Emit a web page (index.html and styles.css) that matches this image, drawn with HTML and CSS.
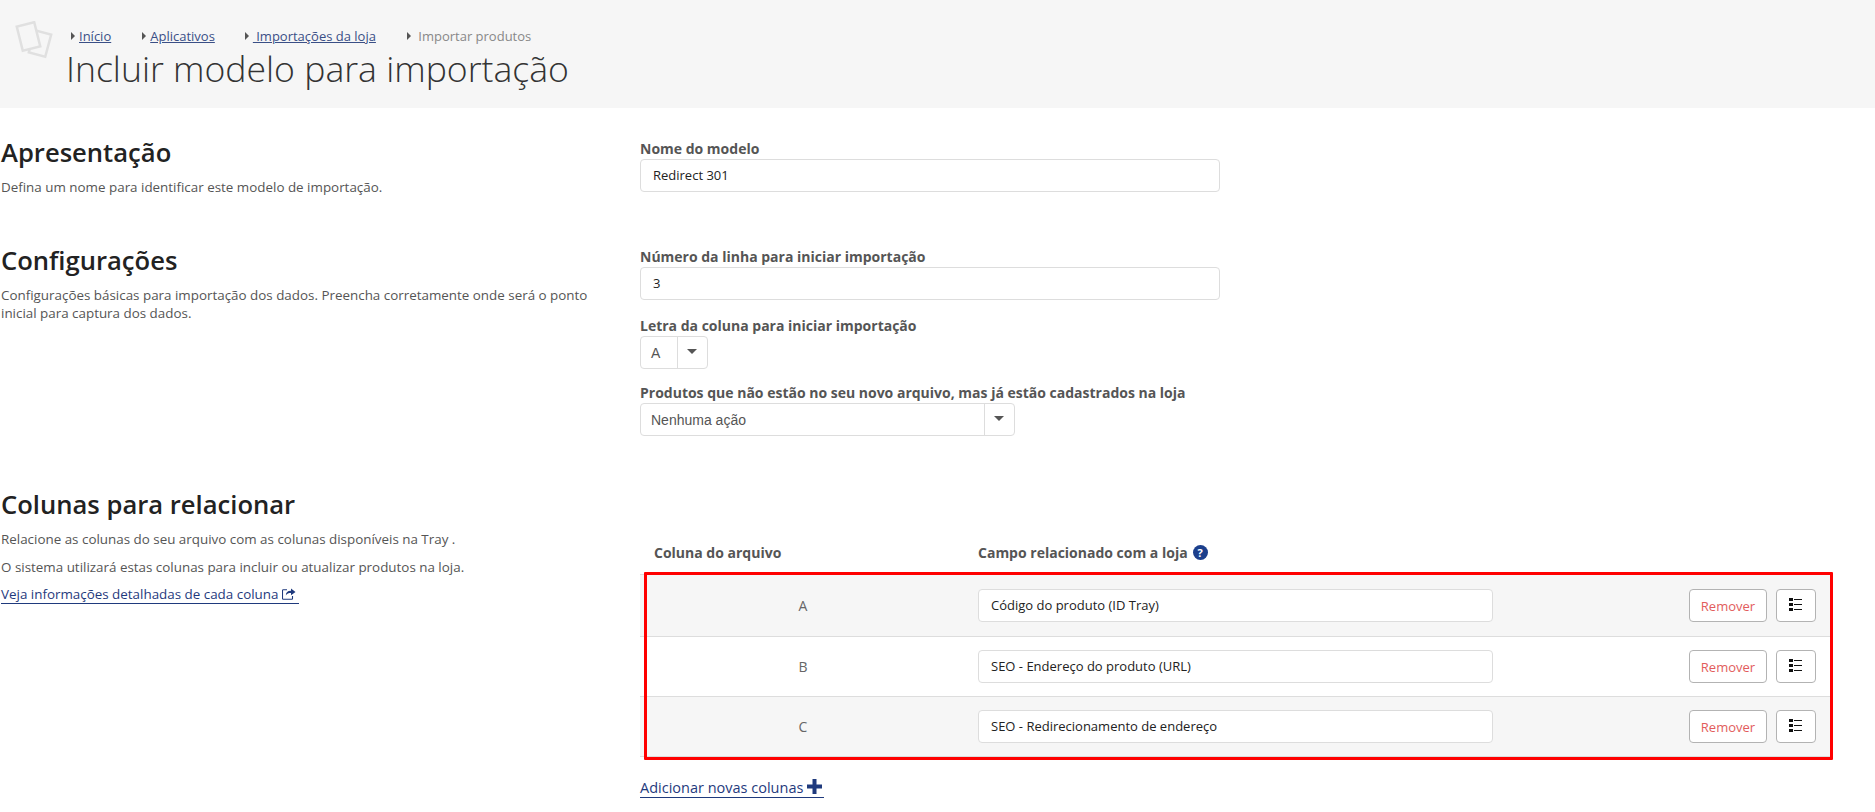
FILE: index.html
```html
<!DOCTYPE html>
<html lang="pt-BR">
<head>
<meta charset="utf-8">
<title>Incluir modelo para importação</title>
<link rel="stylesheet" href="styles.css">
</head>
<body>
<header class="page-header">
  <svg class="header-icon" width="40" height="44" viewBox="0 0 40 44" aria-hidden="true">
    <rect x="16.500" y="11" width="17" height="23" transform="rotate(15 25 22.500)" fill="none" stroke="#e0e0e0" stroke-width="2.500"/>
    <rect x="4.500" y="3" width="18" height="25" transform="rotate(-14 13.500 15.500)" fill="#f6f6f6" stroke="#e0e0e0" stroke-width="2.500"/>
  </svg>
  <div class="header-body">
    <nav class="breadcrumb">
      <span class="crumb crumb-1"><a href="#">Início</a></span>
      <span class="crumb crumb-2"><a href="#">Aplicativos</a></span>
      <span class="crumb crumb-3"><a href="#">&nbsp;Importações da loja</a></span>
      <span class="crumb crumb-4">&nbsp;Importar produtos</span>
    </nav>
    <h1 class="page-title">Incluir modelo para importação</h1>
  </div>
</header>

<main>
  <section class="section section-intro">
    <div class="section-side">
      <h2>Apresentação</h2>
      <p>Defina um nome para identificar este modelo de importação.</p>
    </div>
    <div class="section-form">
      <label class="label">Nome do modelo</label>
      <input class="input input-wide" type="text" value="Redirect 301">
    </div>
  </section>

  <section class="section section-config">
    <div class="section-side">
      <h2>Configurações</h2>
      <p>Configurações básicas para importação dos dados. Preencha corretamente onde será o ponto inicial para captura dos dados.</p>
    </div>
    <div class="section-form">
      <label class="label">Número da linha para iniciar importação</label>
      <input class="input input-wide" type="text" value="3">
      <label class="label label-second">Letra da coluna para iniciar importação</label>
      <div class="select select-small"><span class="select-value">A</span><span class="select-arrow"></span></div>
      <label class="label label-third">Produtos que não estão no seu novo arquivo, mas já estão cadastrados na loja</label>
      <div class="select select-large"><span class="select-value">Nenhuma ação</span><span class="select-arrow"></span></div>
    </div>
  </section>

  <section class="section section-columns">
    <div class="section-side">
      <h2>Colunas para relacionar</h2>
      <p class="para">Relacione as colunas do seu arquivo com as colunas disponíveis na Tray .</p>
      <p class="para">O sistema utilizará estas colunas para incluir ou atualizar produtos na loja.</p>
      <a class="info-link" href="#">Veja informações detalhadas de cada coluna
        <svg width="14" height="12" viewBox="0 0 14 12" aria-hidden="true"><path d="M9 0.5v2.2C5.500 2.700 3.800 4.600 3.800 7.400 5 5.700 6.600 5.100 9 5.100v2.200L13.500 3.900z" fill="#1f3a7d"/><path d="M5 1.800H1.200a.7.7 0 0 0-.7.7v8a.7.7 0 0 0 .7.7h8.600a.7.7 0 0 0 .7-.7V8" fill="none" stroke="#1f3a7d" stroke-width="1.100"/></svg>
      </a>
    </div>
    <div class="section-form">
      <div class="table-wrap">
        <div class="table-head">
          <div class="col-file">Coluna do arquivo</div>
          <div class="col-field">Campo relacionado com a loja <span class="help">?</span></div>
        </div>
        <div class="row row-first row-odd">
          <div class="cell-letter">A</div>
          <div class="cell-field"><input class="input input-field" type="text" value="Código do produto (ID Tray)"></div>
          <div class="cell-actions">
            <button class="btn btn-remove" type="button">Remover</button>
            <button class="btn btn-list" type="button" aria-label="Lista"><svg width="13" height="13" viewBox="0 0 13 13" shape-rendering="crispEdges"><path d="M0 0h4v3H0zM0 5h4v3H0zM0 10h4v3H0zM5 1h8v1H5zM5 6h8v1H5zM5 11h8v1H5z" fill="#111"/></svg></button>
          </div>
        </div>
        <div class="row">
          <div class="cell-letter">B</div>
          <div class="cell-field"><input class="input input-field" type="text" value="SEO - Endereço do produto (URL)"></div>
          <div class="cell-actions">
            <button class="btn btn-remove" type="button">Remover</button>
            <button class="btn btn-list" type="button" aria-label="Lista"><svg width="13" height="13" viewBox="0 0 13 13" shape-rendering="crispEdges"><path d="M0 0h4v3H0zM0 5h4v3H0zM0 10h4v3H0zM5 1h8v1H5zM5 6h8v1H5zM5 11h8v1H5z" fill="#111"/></svg></button>
          </div>
        </div>
        <div class="row row-odd">
          <div class="cell-letter">C</div>
          <div class="cell-field"><input class="input input-field" type="text" value="SEO - Redirecionamento de endereço"></div>
          <div class="cell-actions">
            <button class="btn btn-remove" type="button">Remover</button>
            <button class="btn btn-list" type="button" aria-label="Lista"><svg width="13" height="13" viewBox="0 0 13 13" shape-rendering="crispEdges"><path d="M0 0h4v3H0zM0 5h4v3H0zM0 10h4v3H0zM5 1h8v1H5zM5 6h8v1H5zM5 11h8v1H5z" fill="#111"/></svg></button>
          </div>
        </div>
        <div class="highlight"></div>
      </div>
      <a class="add-link" href="#">Adicionar novas colunas <svg width="15" height="15" viewBox="0 0 15 15" aria-hidden="true"><path d="M5.500 0h4v5.500H15v4H9.500V15h-4V9.500H0v-4h5.500z" fill="#1f3a7d"/></svg></a>
    </div>
  </section>
</main>
</body>
</html>
```
FILE: styles.css
```css
* { box-sizing: border-box; }
html, body { margin: 0; padding: 0; }
body {
  font-family: "Open Sans", sans-serif;
  font-size: 13.400px;
  color: #555;
  background: #fff;
  overflow: hidden;
  height: 812px;
}
a { color: #1f3a7d; }

.page-header {
  height: 108px;
  background: #f6f6f6;
  display: flex;
  padding: 21px 0 0 15px;
}
.header-icon { flex: none; margin-right: 11px; }
.header-body { margin-top: 6px; }
.breadcrumb { display: flex; font-size: 13px; line-height: 18px; color: #888; }
.crumb { position: relative; padding-left: 8px; }
.crumb::before {
  content: "";
  position: absolute;
  left: 0;
  top: 5px;
  border-left: 4px solid #555;
  border-top: 4px solid transparent;
  border-bottom: 4px solid transparent;
}
.crumb-1 { margin-left: 5px; margin-right: 31px; }
.crumb-2 { margin-right: 30px; }
.crumb-3 { margin-right: 31px; }
.crumb a { color: #3a4f86; }
.page-title {
  margin: 0;
  font-size: 35.600px;
  line-height: 46px;
  font-weight: 300;
  color: #333;
}

.section {
  display: grid;
  grid-template-columns: 640px 580px;
}
.section-side { padding-left: 1px; }
.section-side h2 {
  margin: 0;
  font-size: 25.600px;
  line-height: 34px;
  font-weight: 600;
  color: #222;
}
.section-side p { margin: 8px 0 0; line-height: 18px; width: 605px; }
.section-intro { padding-top: 28px; }
.section-config { padding-top: 48px; }
.section-columns { padding-top: 52px; grid-template-columns: 640px 1190px; }

.label {
  display: block;
  font-weight: 700;
  font-size: 14px;
  line-height: 18px;
  color: #555;
}
.label-second { margin-top: 17px; }
.label-third { margin-top: 15px; }
.input {
  display: block;
  font-family: "Open Sans", sans-serif;
  font-size: 13px;
  color: #222;
  background: #fff;
  border: 1px solid #ddd;
  border-radius: 4px;
  padding: 0 12px 2px;
  height: 33px;
  outline: none;
}
.input-wide { width: 580px; margin-top: 1px; }
.section-form { padding-top: 4px; }

.select {
  display: flex;
  height: 33px;
  margin-top: 1px;
  border: 1px solid #ddd;
  border-radius: 4px;
  background: #fff;
  font-family: "Liberation Sans", sans-serif;
  font-size: 14px;
  color: #555;
}
.select-value { flex: 1; padding-left: 10px; line-height: 33px; }
.select-arrow {
  width: 30px;
  border-left: 1px solid #ddd;
  position: relative;
}
.select-arrow::after {
  content: "";
  position: absolute;
  left: 9px;
  top: 12px;
  border-top: 5px solid #555;
  border-left: 5px solid transparent;
  border-right: 5px solid transparent;
}
.select-small { width: 68px; }
.select-large { width: 375px; }

.section-side .para { margin: 0 0 9.500px; }
.section-columns h2 { margin-bottom: 8px; }
.info-link {
  display: inline-block;
  text-decoration: none;
  border-bottom: 1px solid #1f3a7d;
  line-height: 18px;
  padding-right: 3px;
  color: #1f3a7d;
}
.info-link svg { vertical-align: -1px; }

.table-wrap { position: relative; margin-top: 42px; }
.table-head {
  display: flex;
  height: 40px;
  padding-bottom: 4px;
  font-weight: 700;
  font-size: 14px;
  color: #555;
  align-items: center;
}
.col-file { width: 338px; padding-left: 14px; }
.col-field { display: flex; align-items: center; gap: 5px; }
.help {
  width: 15px;
  height: 15px;
  border-radius: 50%;
  background: #1c3f8c;
  color: #fff;
  font-size: 11px;
  line-height: 15px;
  text-align: center;
}
.row {
  display: flex;
  align-items: center;
  height: 60px;
  border-bottom: 1px solid #ddd;
  background: #fff;
}
.row-first { height: 63px; border-top: 1px solid #ddd; }
.row-odd { background: #f6f6f6; }
.cell-letter { width: 338px; text-align: center; font-size: 14px; color: #666; padding-right: 12px; }
.cell-field { width: 515px; }
.input-field { width: 515px; }
.cell-actions { margin-left: auto; display: flex; gap: 9px; padding-right: 14px; }
.btn {
  height: 33px;
  background: #fff;
  border: 1px solid #b3b3b3;
  border-radius: 4px;
  font-family: "Open Sans", sans-serif;
  font-size: 13px;
  padding: 0;
}
.btn-remove { width: 78px; color: #e25c5c; }
.btn-list { width: 40px; display: flex; align-items: center; justify-content: center; padding: 0 2px 2px 0; }

.highlight {
  position: absolute;
  left: 4px;
  right: -3px;
  top: 38px;
  bottom: -3px;
  border: 3px solid #f00;
  border-radius: 1px;
  pointer-events: none;
}
.add-link {
  display: inline-block;
  margin-top: 22px;
  padding-right: 2px;
  font-size: 14.500px;
  line-height: 18px;
  text-decoration: none;
  border-bottom: 1px solid #1f3a7d;
  color: #1f3a7d;
}
.add-link svg { vertical-align: -1px; }
```
